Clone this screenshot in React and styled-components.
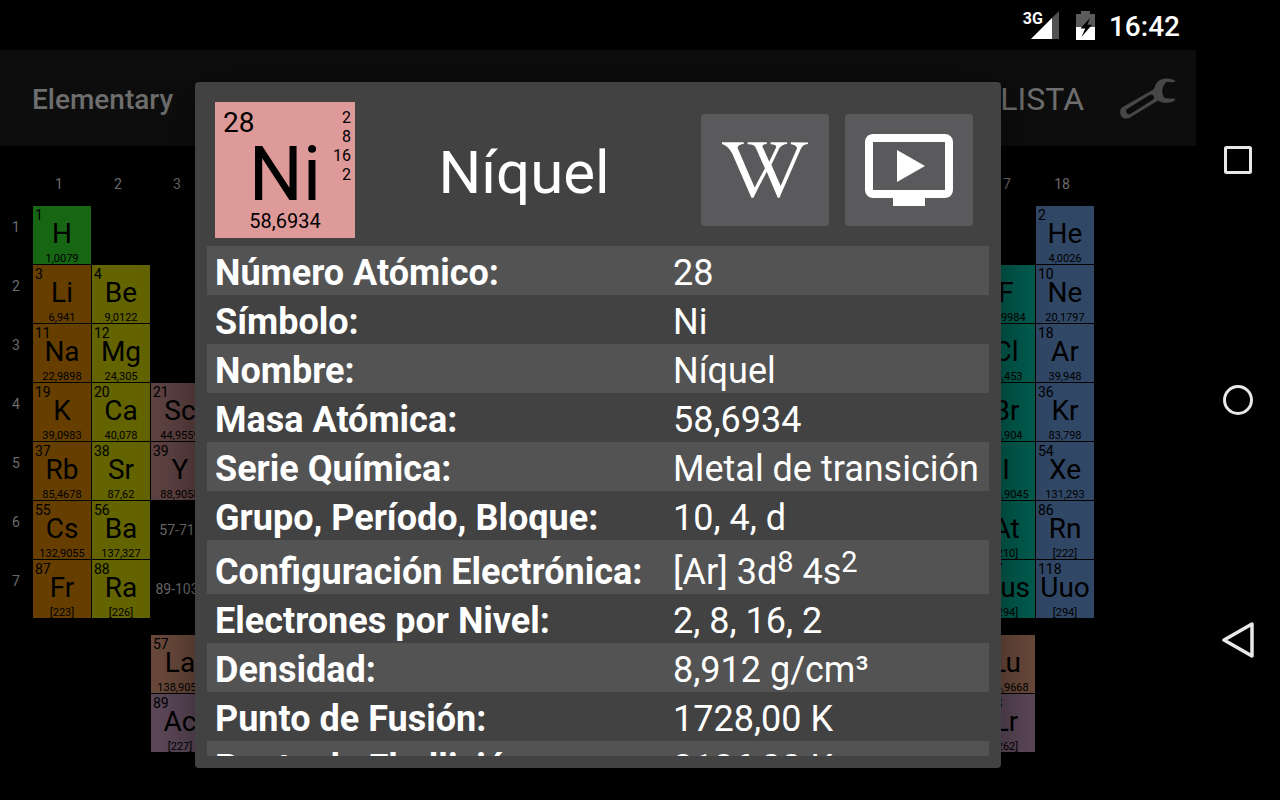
import React from "react";
import styled, { createGlobalStyle } from "styled-components";
import { FaWikipediaW } from "react-icons/fa";
import { MdOndemandVideo } from "react-icons/md";

const GlobalStyle = createGlobalStyle`
  * { box-sizing: border-box; }
  body {
    margin: 0;
    background: #000;
    color: #fff;
    font-family: Roboto, "Liberation Sans", sans-serif;
    overflow: hidden;
  }
  button {
    margin: 0;
    padding: 0;
    border: 0;
    background: none;
    color: inherit;
    font: inherit;
    cursor: pointer;
  }
  h1, h2, p { margin: 0; }
`;

const Screen = styled.div`
  display: grid;
  grid-template-columns: minmax(0, 1fr) 84px;
  height: 100vh;
`;

const Main = styled.div`
  position: relative;
  display: flex;
  flex-direction: column;
  min-height: 0;
  overflow: hidden;
`;

const StatusBar = styled.header`
  display: flex;
  flex: none;
  align-items: center;
  justify-content: flex-end;
  height: 50px;
  padding-right: 16px;
`;

const Signal = styled.div`
  display: flex;
  align-items: flex-start;
  height: 28px;
  margin-right: 17px;
  font-size: 16px;
  font-weight: 700;
  line-height: 16px;

  svg { margin-left: -12px; }
`;

const Clock = styled.time`
  margin-left: 14px;
  padding-top: 4px;
  font-size: 28px;
  font-weight: 500;
  line-height: 46px;
`;

const ActionBar = styled.div`
  display: flex;
  flex: none;
  align-items: center;
  height: 96px;
  padding: 0 16px 0 32px;
  background: #0d0d0d;
  color: #6e6e6e;
`;

const AppTitle = styled.h1`
  flex: 1;
  padding-top: 2px;
  font-size: 28px;
  font-weight: 500;
`;

const ListButton = styled.button`
  margin-right: 32px;
  padding-top: 2px;
  font-size: 32px;
`;

const ToolButton = styled.button`
  display: flex;
  color: #474747;
`;

const Board = styled.main`
  display: grid;
  grid-template-columns: 32px repeat(18, 58px);
  grid-template-rows: 59px repeat(7, 58px) 15px repeat(2, 58px);
  gap: 1px;
`;

const AxisLabel = styled.span`
  grid-column: ${(p) => p.$col + 1};
  grid-row: ${(p) => p.$row + 1};
  padding-top: ${(p) => (p.$row === 0 ? 30 : 13)}px;
  padding-right: ${(p) => (p.$row === 0 ? 6 : 0)}px;
  color: #6b6b6b;
  font-size: 14px;
  line-height: 16px;
  text-align: center;
`;

const SeriesRange = styled.span`
  grid-column: 4;
  grid-row: ${(p) => p.$row + 1};
  align-self: center;
  padding-right: 6px;
  color: #6b6b6b;
  font-size: 14px;
  text-align: center;
  white-space: nowrap;
`;

const Cell = styled.article`
  grid-column: ${(p) => p.$col + 1};
  grid-row: ${(p) => p.$row + 1};
  display: flex;
  flex-direction: column;
  align-items: center;
  overflow: hidden;
  background: ${(p) => p.$color};
  color: #000;
`;

const CellNumber = styled.span`
  align-self: flex-start;
  padding: 3px 0 0 2px;
  font-size: 14px;
  line-height: 12px;
`;

const CellSymbol = styled.b`
  font-size: 28px;
  font-weight: 400;
  line-height: 26px;
`;

const CellMass = styled.span`
  padding-top: 7px;
  font-size: 11px;
  line-height: 10px;
`;

const DialogLayer = styled.div`
  position: absolute;
  inset: 50px 0 0;
  display: flex;
  justify-content: center;
  padding: 32px;
`;

const Dialog = styled.section`
  display: flex;
  flex-direction: column;
  width: 100%;
  max-width: 806px;
  padding: 20px 12px 12px;
  border-radius: 4px;
  background: #424242;
  box-shadow: 0 10px 48px rgba(0, 0, 0, 0.45);
`;

const DialogHeader = styled.div`
  display: flex;
  flex: none;
  align-items: center;
  gap: 16px;
  padding: 0 16px 8px 8px;
`;

const Tile = styled.div`
  display: grid;
  grid-template-columns: 1fr auto;
  grid-template-rows: 40px 64px 32px;
  width: 140px;
  height: 136px;
  background: #de9999;
  color: #000;
`;

const TileNumber = styled.span`
  padding-left: 8px;
  font-size: 28px;
  line-height: 42px;
`;

const TileShells = styled.span`
  grid-column: 2;
  grid-row: 1 / 3;
  padding: 6px 4px 0 0;
  font-size: 16px;
  line-height: 19px;
  text-align: right;
  white-space: pre-line;
`;

const TileSymbol = styled.b`
  grid-column: 1 / 3;
  grid-row: 2;
  font-size: 76px;
  font-weight: 400;
  line-height: 64px;
  text-align: center;
`;

const TileMass = styled.span`
  grid-column: 1 / 3;
  font-size: 20px;
  line-height: 30px;
  text-align: center;
`;

const DialogTitle = styled.h2`
  flex: 1;
  padding: 4px 8px 0 0;
  font-size: 60px;
  font-weight: 400;
  text-align: center;
`;

const LinkButton = styled.button`
  display: flex;
  flex: none;
  align-items: center;
  justify-content: center;
  width: 128px;
  height: 112px;
  border-radius: 4px;
  background: #5a5a5c;
`;

const Scroll = styled.div`
  flex: 1;
  min-height: 0;
  overflow: hidden;
`;

const Facts = styled.table`
  width: 100%;
  border-collapse: collapse;
  font-size: 36px;
  line-height: 42px;
  text-align: left;
`;

const FactRow = styled.tr`
  height: ${(p) => (p.$tall ? 54 : 49)}px;
  background: ${(p) => (p.$shaded ? "#535353" : "transparent")};

  th, td {
    padding: ${(p) => (p.$tall ? "11px 8px 1px" : "6px 8px 1px")};
    white-space: nowrap;
  }

  th { font-weight: 700; }

  td { width: 324px; }

  sup {
    font-size: 29px;
    line-height: 0;
    vertical-align: 12px;
  }
`;

const SystemNav = styled.nav`
  display: flex;
  flex-direction: column;
  padding: 40px 0;
`;

const NavButton = styled.button`
  display: flex;
  flex: 1;
  align-items: center;
  justify-content: center;
`;

const ALKALI = "#663f00";
const EARTH = "#636300";
const TRANSITION = "#5e4242";
const HALOGEN = "#005c4e";
const NOBLE = "#314766";
const LANTHANIDE = "#69493b";
const ACTINIDE = "#5b4758";

const elements = [
  [1, "H", "1,0079", 1, 1, "#166614"],
  [3, "Li", "6,941", 1, 2, ALKALI],
  [11, "Na", "22,9898", 1, 3, ALKALI],
  [19, "K", "39,0983", 1, 4, ALKALI],
  [37, "Rb", "85,4678", 1, 5, ALKALI],
  [55, "Cs", "132,9055", 1, 6, ALKALI],
  [87, "Fr", "[223]", 1, 7, ALKALI],
  [4, "Be", "9,0122", 2, 2, EARTH],
  [12, "Mg", "24,305", 2, 3, EARTH],
  [20, "Ca", "40,078", 2, 4, EARTH],
  [38, "Sr", "87,62", 2, 5, EARTH],
  [56, "Ba", "137,327", 2, 6, EARTH],
  [88, "Ra", "[226]", 2, 7, EARTH],
  [21, "Sc", "44,9559", 3, 4, TRANSITION],
  [39, "Y", "88,9058", 3, 5, TRANSITION],
  [9, "F", "18,9984", 17, 2, HALOGEN],
  [17, "Cl", "35,453", 17, 3, HALOGEN],
  [35, "Br", "79,904", 17, 4, HALOGEN],
  [53, "I", "126,9045", 17, 5, HALOGEN],
  [85, "At", "[210]", 17, 6, HALOGEN],
  [117, "Uus", "[294]", 17, 7, HALOGEN],
  [2, "He", "4,0026", 18, 1, NOBLE],
  [10, "Ne", "20,1797", 18, 2, NOBLE],
  [18, "Ar", "39,948", 18, 3, NOBLE],
  [36, "Kr", "83,798", 18, 4, NOBLE],
  [54, "Xe", "131,293", 18, 5, NOBLE],
  [86, "Rn", "[222]", 18, 6, NOBLE],
  [118, "Uuo", "[294]", 18, 7, NOBLE],
  [57, "La", "138,9055", 3, 9, LANTHANIDE],
  [89, "Ac", "[227]", 3, 10, ACTINIDE],
  [71, "Lu", "174,9668", 17, 9, LANTHANIDE],
  [103, "Lr", "[262]", 17, 10, ACTINIDE],
];

const facts = [
  ["Número Atómico:", "28"],
  ["Símbolo:", "Ni"],
  ["Nombre:", "Níquel"],
  ["Masa Atómica:", "58,6934"],
  ["Serie Química:", "Metal de transición"],
  ["Grupo, Período, Bloque:", "10, 4, d"],
  ["Configuración Electrónica:", <>[Ar] 3d<sup>8</sup> 4s<sup>2</sup></>, true],
  ["Electrones por Nivel:", "2, 8, 16, 2"],
  ["Densidad:", "8,912 g/cm³"],
  ["Punto de Fusión:", "1728,00 K"],
  ["Punto de Ebullición:", "3186,00 K"],
];

const SignalIcon = () => (
  <svg width="28" height="28" viewBox="0 0 28 28" aria-hidden="true">
    <path d="M0 28L28 0v28z" fill="#515151" />
    <path d="M0 28L21 7V28z" fill="#fff" />
  </svg>
);

const BatteryIcon = () => (
  <svg width="19" height="29" viewBox="0 0 19 29" aria-hidden="true">
    <path d="M0 3h5V0h9v3h5v13H0z" fill="#5b5b5b" />
    <path d="M0 16h19v13H0z" fill="#fff" />
    <path d="M14 7L4.500 17.500h4.700L5.500 26 16 13.800h-4.500z" fill="#000" />
  </svg>
);

const WrenchIcon = () => (
  <svg width="64" height="50" viewBox="382 220 186 145" aria-hidden="true">
    <path
      d="M555 242C540 230 508 232 498 250C493 258 493 263 490 267L402 317C391 324 390 336 397 346C405 356 415 355 425 349L504 301C520 311 544 309 555 299C555 294 552 292 546 293L524 292C518 286 516 272 520 260C523 254 526 249 530 247L546 248C552 248 555 246 555 242Z"
      fill="currentColor"
      stroke="#050505"
      strokeWidth="2"
    />
    <path d="M420 331L484 291" stroke="#0b0b0b" strokeWidth="17" strokeLinecap="round" />
  </svg>
);

const range = (n) => Array.from({ length: n }, (_, i) => i + 1);

export default function App() {
  return (
    <>
      <GlobalStyle />
      <Screen>
        <Main>
          <StatusBar>
            <Signal>
              3G
              <SignalIcon />
            </Signal>
            <BatteryIcon />
            <Clock>16:42</Clock>
          </StatusBar>
          <ActionBar>
            <AppTitle>Elementary</AppTitle>
            <ListButton type="button">LISTA</ListButton>
            <ToolButton type="button" aria-label="Ajustes">
              <WrenchIcon />
            </ToolButton>
          </ActionBar>
          <Board>
            {[1, 2, 3, 17, 18].map((n) => (
              <AxisLabel key={n} $col={n} $row={0}>{n}</AxisLabel>
            ))}
            {range(7).map((n) => (
              <AxisLabel key={n} $col={0} $row={n}>{n}</AxisLabel>
            ))}
            <SeriesRange $row={6}>57-71</SeriesRange>
            <SeriesRange $row={7}>89-103</SeriesRange>
            {elements.map(([number, symbol, mass, col, row, color]) => (
              <Cell key={number} $col={col} $row={row} $color={color}>
                <CellNumber>{number}</CellNumber>
                <CellSymbol>{symbol}</CellSymbol>
                <CellMass>{mass}</CellMass>
              </Cell>
            ))}
          </Board>
          <DialogLayer>
            <Dialog role="dialog" aria-labelledby="element-name">
              <DialogHeader>
                <Tile>
                  <TileNumber>28</TileNumber>
                  <TileShells>{"2\n8\n16\n2"}</TileShells>
                  <TileSymbol>Ni</TileSymbol>
                  <TileMass>58,6934</TileMass>
                </Tile>
                <DialogTitle id="element-name">Níquel</DialogTitle>
                <LinkButton type="button" aria-label="Wikipedia">
                  <FaWikipediaW size={86} />
                </LinkButton>
                <LinkButton type="button" aria-label="Vídeo">
                  <MdOndemandVideo size={96} />
                </LinkButton>
              </DialogHeader>
              <Scroll>
                <Facts>
                  <tbody>
                    {facts.map(([label, value, tall], i) => (
                      <FactRow key={label} $shaded={i % 2 === 0} $tall={tall}>
                        <th scope="row">{label}</th>
                        <td>{value}</td>
                      </FactRow>
                    ))}
                  </tbody>
                </Facts>
              </Scroll>
            </Dialog>
          </DialogLayer>
        </Main>
        <SystemNav>
          <NavButton type="button" aria-label="Recientes">
            <svg width="28" height="28" viewBox="0 0 28 28">
              <rect x="1.500" y="1.500" width="25" height="25" rx="1" fill="none" stroke="#e8e8e8" strokeWidth="3" />
            </svg>
          </NavButton>
          <NavButton type="button" aria-label="Inicio">
            <svg width="30" height="30" viewBox="0 0 30 30">
              <circle cx="15" cy="15" r="13.500" fill="none" stroke="#e8e8e8" strokeWidth="3" />
            </svg>
          </NavButton>
          <NavButton type="button" aria-label="Atrás">
            <svg width="32" height="38" viewBox="0 0 32 38">
              <path d="M30 3v32L2 19z" fill="none" stroke="#e8e8e8" strokeWidth="3.500" strokeLinejoin="round" />
            </svg>
          </NavButton>
        </SystemNav>
      </Screen>
    </>
  );
}
